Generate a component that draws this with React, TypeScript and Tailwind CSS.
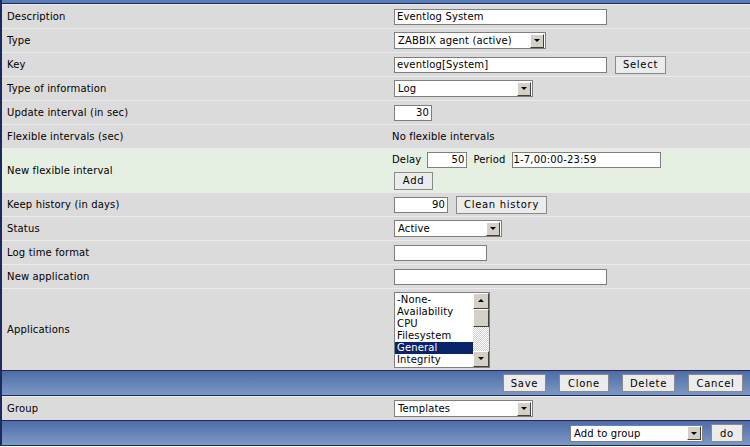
import React from 'react';

// item edit form: labels on the left, controls on the right

function Arrow() {
    return (
        <div className="flex h-[14px] w-[14px] shrink-0 items-center justify-center border border-t-white border-l-white border-r-[#404040] border-b-[#404040] bg-[#d4d0c8]">
            <div className="h-0 w-0 border-x-[3px] border-t-[3px] border-x-transparent border-t-black" />
        </div>
    );
}

function Select({ value, className }: { value: string; className: string }) {
    return (
        <div className={`flex h-[17px] items-center justify-between border border-[#7f7f7f] bg-white pl-[3px] pr-[1px] ${className}`}>
            <span className="truncate">{value}</span>
            <Arrow />
        </div>
    );
}

function Field({ value, className, right }: { value?: string; className: string; right?: boolean }) {
    return (
        <div className={`flex h-[16px] items-center border border-[#7f7f7f] bg-white px-[2px] ${right ? 'justify-end' : ''} ${className}`}>
            {value}
        </div>
    );
}

function Button({ children, className }: { children: React.ReactNode; className: string }) {
    return (
        <button className={`flex h-[18px] items-center justify-center border border-[#8a8a8a] bg-[#ececec] tracking-[0.7px] text-black ${className}`}>
            {children}
        </button>
    );
}

function Row({ label, children, className = 'h-[24px]', green }: { label: string; children?: React.ReactNode; className?: string; green?: boolean }) {
    return (
        <div className={`flex border-t border-[#ececec] ${green ? 'bg-[#e5f0e3]' : 'bg-[#dcdbdc]'} ${className}`}>
            <div className="flex w-[388px] shrink-0 items-center pl-[5px]">{label}</div>
            <div className="flex flex-1 items-center">{children}</div>
        </div>
    );
}

function BlueBar({ children }: { children?: React.ReactNode }) {
    return (
        <div className="flex h-[26px] items-center justify-end border-y border-[#1c2a5c] bg-linear-to-b from-[#4d6ca8] to-[#7f99c4] pr-[7px]">
            {children}
        </div>
    );
}

const apps = ['-None-', 'Availability', 'CPU', 'Filesystem', 'General', 'Integrity'];

export default function App() {
    return (
        <main className="h-[447px] w-[750px] overflow-hidden bg-white font-['DejaVu_Sans',Verdana,sans-serif] text-[10px] tracking-[0.15px] text-black">
            <div className="border-l-2 border-[#1c2a5c]">
                <div className="h-[4px] border-b border-[#1c2a5c] bg-[#5d7bb3]" />

                <Row label="Description">
                    <Field value="Eventlog System" className="ml-[4px] w-[213px]" />
                </Row>
                <Row label="Type">
                    <Select value="ZABBIX agent (active)" className="ml-[4px] w-[152px]" />
                </Row>
                <Row label="Key">
                    <Field value="eventlog[System]" className="ml-[4px] w-[213px]" />
                    <Button className="ml-[8px] w-[51px]">Select</Button>
                </Row>
                <Row label="Type of information">
                    <Select value="Log" className="ml-[4px] w-[139px]" />
                </Row>
                <Row label="Update interval (in sec)">
                    <Field value="30" right className="ml-[4px] w-[38px]" />
                </Row>
                <Row label="Flexible intervals (sec)">
                    <span className="ml-[2px]">No flexible intervals</span>
                </Row>

                <Row label="New flexible interval" className="h-[44px]" green>
                    <div className="flex flex-col items-start gap-[4px] pl-[2px]">
                        <div className="flex items-center">
                            <span>Delay</span>
                            <Field value="50" right className="ml-[6px] w-[40px]" />
                            <span className="ml-[6px]">Period</span>
                            <Field value="1-7,00:00-23:59" className="ml-[6px] w-[149px] !px-[1px]" />
                        </div>
                        <Button className="ml-[2px] w-[39px]">Add</Button>
                    </div>
                </Row>

                <Row label="Keep history (in days)">
                    <Field value="90" right className="ml-[4px] w-[54px]" />
                    <Button className="ml-[8px] w-[91px]">Clean history</Button>
                </Row>
                <Row label="Status">
                    <Select value="Active" className="ml-[4px] w-[108px]" />
                </Row>
                <Row label="Log time format">
                    <Field className="ml-[4px] w-[93px]" />
                </Row>
                <Row label="New application">
                    <Field className="ml-[4px] w-[213px]" />
                </Row>

                <Row label="Applications" className="h-[82px]">
                    <div className="ml-[4px] flex h-[76px] w-[96px] border border-[#7f7f7f] bg-white">
                        <ul className="flex-1 pt-[1px]">
                            {apps.map((a) => (
                                <li key={a} className={`h-[12px] pl-[2px] leading-[12px] ${a === 'General' ? 'bg-[#0a246a] text-white' : ''}`}>
                                    {a}
                                </li>
                            ))}
                        </ul>
                        {/* scrollbar */}
                        <div className="flex w-[16px] flex-col bg-[repeating-conic-gradient(#d4d0c8_0_25%,#ffffff_0_50%)] bg-[length:2px_2px]">
                            <div className="flex h-[16px] items-center justify-center border border-t-white border-l-white border-r-[#404040] border-b-[#404040] bg-[#d4d0c8]">
                                <div className="h-0 w-0 border-x-[3px] border-b-[3px] border-x-transparent border-b-black" />
                            </div>
                            <div className="h-[18px] border border-t-white border-l-white border-r-[#404040] border-b-[#404040] bg-[#d4d0c8]" />
                            <div className="flex-1" />
                            <div className="flex h-[16px] items-center justify-center border border-t-white border-l-white border-r-[#404040] border-b-[#404040] bg-[#d4d0c8]">
                                <div className="h-0 w-0 border-x-[3px] border-t-[3px] border-x-transparent border-t-black" />
                            </div>
                        </div>
                    </div>
                </Row>

                <BlueBar>
                    <div className="flex gap-[13px]">
                        <Button className="w-[43px]">Save</Button>
                        <Button className="w-[50px]">Clone</Button>
                        <Button className="w-[53px]">Delete</Button>
                        <Button className="w-[55px]">Cancel</Button>
                    </div>
                </BlueBar>

                <Row label="Group">
                    <Select value="Templates" className="ml-[4px] w-[139px]" />
                </Row>

                <BlueBar>
                    <div className="flex items-center gap-[8px]">
                        <Select value="Add to group" className="w-[133px]" />
                        <Button className="w-[32px]">do</Button>
                    </div>
                </BlueBar>
            </div>
        </main>
    );
}
